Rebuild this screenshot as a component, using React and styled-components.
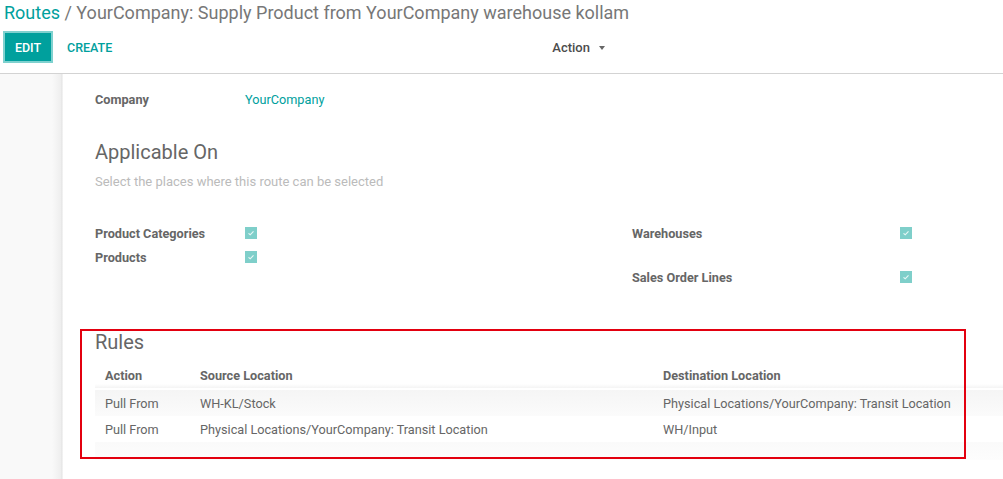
import React from "react";
import styled, { createGlobalStyle } from "styled-components";

const Global = createGlobalStyle`
  html, body { margin: 0; padding: 0; background: #fff; }
  body { font-family: Roboto, "Noto Sans", "Liberation Sans", sans-serif; color: #666; font-size: 12.7px; }
  * { box-sizing: border-box; }
`;

const Page = styled.div`
  width: 1003px;
  height: 479px;
  overflow: hidden;
  position: relative;
  display: flex;
  flex-direction: column;
`;

const ControlPanel = styled.div`
  height: 74px;
  border-bottom: 1px solid #d3d3d3;
  padding: 0 0 0 3px;
  display: flex;
  flex-direction: column;
`;

const Breadcrumb = styled.div`
  height: 26px;
  line-height: 26px;
  font-size: 18px;
  padding-left: 1px;
  color: #777;
  white-space: nowrap;
`;

const Crumb = styled.span`
  color: ${(p) => (p.$link ? "#00a09d" : "#777")};
`;

const Toolbar = styled.div`
  margin-top: 5px;
  display: flex;
  align-items: center;
  height: 32px;
`;

const Button = styled.button`
  font-family: inherit;
  height: 32px;
  font-size: 12.5px;
  font-weight: 500;
  text-transform: uppercase;
  letter-spacing: 0;
  cursor: pointer;
  padding: 0 ${(p) => (p.$primary ? "0" : "11px")};
  margin-right: ${(p) => (p.$primary ? "1px" : "0")};
  width: ${(p) => (p.$primary ? "50px" : "auto")};
  background: ${(p) => (p.$primary ? "#00a09d" : "transparent")};
  color: ${(p) => (p.$primary ? "#fff" : "#00a09d")};
  border: 2px solid ${(p) => (p.$primary ? "#7fd1cf" : "transparent")};
`;

const ActionMenu = styled.div`
  margin-left: 427px;
  display: flex;
  align-items: center;
  gap: 9px;
  color: #4c4c4c;
  font-size: 13px;
  font-weight: 500;
`;

const Caret = styled.span`
  width: 0;
  height: 0;
  border-left: 3px solid transparent;
  border-right: 3px solid transparent;
  border-top: 4px solid #666;
  margin-top: 1px;
`;

const Main = styled.div`
  flex: 1;
  display: flex;
  min-height: 0;
`;

const Gutter = styled.div`
  width: 63px;
  flex: none;
  background: linear-gradient(to right, #f9f9f9 0, #f9f9f9 52px, #eeeeee 61px, #e2e2e2 62px, #fff 63px);
`;

const Sheet = styled.div`
  flex: 1;
  padding: 15px 0 0 32px;
  background: #fff;
`;

const FieldRow = styled.div`
  display: flex;
  align-items: center;
  height: ${(p) => p.$h || 20}px;
  margin-top: ${(p) => p.$mt || 0}px;
`;

const Label = styled.div`
  width: ${(p) => p.$w || 150}px;
  font-weight: 700;
  color: #666;
  white-space: nowrap;
`;

const LinkValue = styled.span`
  color: #00a09d;
`;

const SectionTitle = styled.div`
  font-size: 20px;
  line-height: 28px;
  color: #666;
  margin-top: ${(p) => p.$mt || 0}px;
`;

const Subtitle = styled.div`
  font-size: 13px;
  line-height: 18px;
  color: #bbb;
  margin-top: 7px;
`;

const Columns = styled.div`
  display: grid;
  grid-template-columns: 537px 1fr;
  margin-top: 32px;
`;

const Column = styled.div`
  display: flex;
  flex-direction: column;
`;

const Check = styled.span`
  width: 12px;
  height: 12px;
  background: #7fcfca;
  display: inline-flex;
  align-items: center;
  justify-content: center;
`;

const CheckBox = () => (
  <Check>
    <svg width="8" height="8" viewBox="0 0 8 8">
      <path d="M1.5 4.4 L3.2 5.8 L6.5 2.4" stroke="#e8f7f6" strokeWidth="1.2" fill="none" />
    </svg>
  </Check>
);

const Table = styled.table`
  border-collapse: collapse;
  width: 100%;
  margin-top: 6px;
  color: #666;
  font-size: 12.7px;
`;

const HeadCell = styled.th`
  text-align: left;
  font-weight: 700;
  height: 26px;
  padding: 0 10px;
  width: ${(p) => p.$w || "auto"};
  white-space: nowrap;
`;

const HeadRow = styled.tr`
  background: linear-gradient(to bottom, #fff 0, #fff 22px, #f4f4f4 26px);
`;

const BodyRow = styled.tr`
  height: 26px;
  background: ${(p) =>
    p.$striped ? "linear-gradient(to bottom, #f5f5f5, #fbfbfb)" : "#fff"};
`;

const Cell = styled.td`
  padding: 0 10px;
  white-space: nowrap;
`;

const Spacer = styled.tr`
  height: 2px;
`;

const FillerRow = styled.tr`
  height: 18px;
  background: linear-gradient(to bottom, #fafafa, #fdfdfd);
`;

const Highlight = styled.div`
  position: absolute;
  left: 80px;
  top: 329px;
  width: 886px;
  height: 130px;
  border: 2px solid #e3000f;
  pointer-events: none;
`;

const rules = [
  { action: "Pull From", src: "WH-KL/Stock", dst: "Physical Locations/YourCompany: Transit Location" },
  { action: "Pull From", src: "Physical Locations/YourCompany: Transit Location", dst: "WH/Input" },
];

export default function App() {
  return (
    <Page>
      <Global />
      <ControlPanel>
        <Breadcrumb>
          <Crumb $link>Routes</Crumb>
          <Crumb> / YourCompany: Supply Product from YourCompany warehouse kollam</Crumb>
        </Breadcrumb>
        <Toolbar>
          <Button $primary>Edit</Button>
          <Button>Create</Button>
          <ActionMenu>
            Action <Caret />
          </ActionMenu>
        </Toolbar>
      </ControlPanel>
      <Main>
        <Gutter />
        <Sheet>
          <FieldRow>
            <Label>Company</Label>
            <LinkValue>YourCompany</LinkValue>
          </FieldRow>
          <SectionTitle $mt={29}>Applicable On</SectionTitle>
          <Subtitle>Select the places where this route can be selected</Subtitle>
          <Columns>
            <Column>
              <FieldRow>
                <Label>Product Categories</Label>
                <CheckBox />
              </FieldRow>
              <FieldRow $mt={4}>
                <Label>Products</Label>
                <CheckBox />
              </FieldRow>
            </Column>
            <Column>
              <FieldRow>
                <Label $w={268}>Warehouses</Label>
                <CheckBox />
              </FieldRow>
              <FieldRow $mt={24}>
                <Label $w={268}>Sales Order Lines</Label>
                <CheckBox />
              </FieldRow>
            </Column>
          </Columns>
          <SectionTitle $mt={41}>Rules</SectionTitle>
          <Table>
            <thead>
              <HeadRow>
                <HeadCell $w="95px">Action</HeadCell>
                <HeadCell $w="463px">Source Location</HeadCell>
                <HeadCell>Destination Location</HeadCell>
              </HeadRow>
            </thead>
            <tbody>
              <Spacer />
              {rules.map((r, i) => (
                <BodyRow key={i} $striped={i % 2 === 0}>
                  <Cell>{r.action}</Cell>
                  <Cell>{r.src}</Cell>
                  <Cell>{r.dst}</Cell>
                </BodyRow>
              ))}
              <FillerRow>
                <td colSpan={3} />
              </FillerRow>
            </tbody>
          </Table>
        </Sheet>
      </Main>
      <Highlight />
    </Page>
  );
}
